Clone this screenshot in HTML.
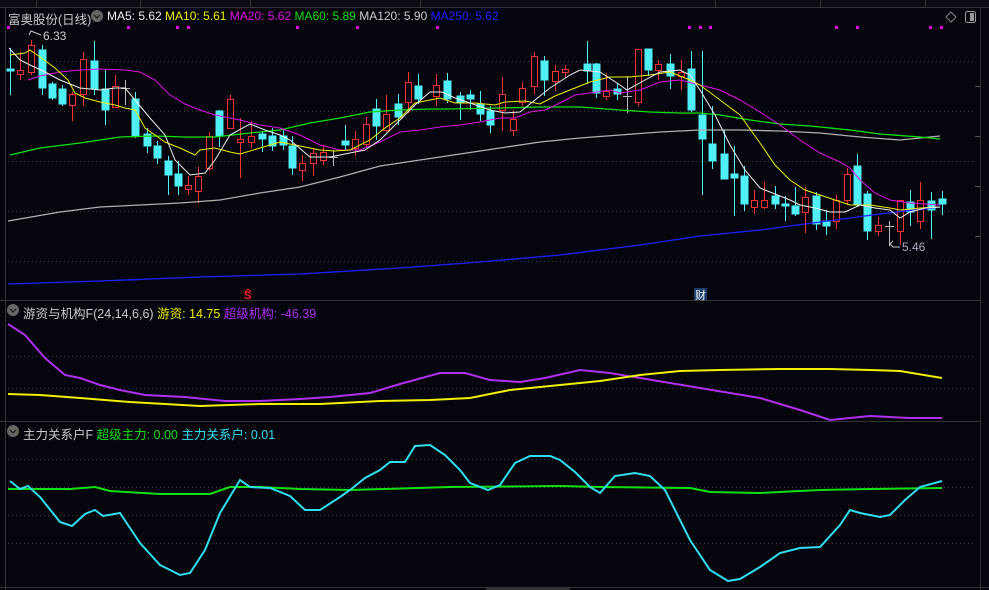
<!DOCTYPE html>
<html><head><meta charset="utf-8"><style>
body{margin:0;background:#05050d;width:989px;height:590px;overflow:hidden;font-family:"Liberation Sans","Noto Sans CJK SC",sans-serif}
svg{position:absolute;left:0;top:0}
.t{position:absolute;font-size:12.5px;white-space:nowrap}
.g{fill:#50f0f8;stroke:#50f0f8}
</style></head><body>
<svg width="989" height="590" xmlns="http://www.w3.org/2000/svg">
<rect width="989" height="590" fill="#05050d"/>
<rect x="0" y="0" width="989" height="7" fill="#0c0c14"/>
<g stroke="#333" stroke-width="1">
<line x1="0" y1="7.5" x2="989" y2="7.5"/>
<line x1="5.5" y1="7" x2="5.5" y2="590"/>
<line x1="980.5" y1="7" x2="980.5" y2="590"/>
<line x1="0" y1="300.5" x2="980" y2="300.5"/>
<line x1="0" y1="421.5" x2="980" y2="421.5"/>
<line x1="0" y1="587.5" x2="989" y2="587.5"/>
<line x1="36.5" y1="0" x2="36.5" y2="7"/><line x1="140.5" y1="0" x2="140.5" y2="7"/><line x1="250.5" y1="0" x2="250.5" y2="7"/><line x1="420.5" y1="0" x2="420.5" y2="7"/><line x1="715.5" y1="0" x2="715.5" y2="7"/><line x1="820.5" y1="0" x2="820.5" y2="7"/><line x1="925.5" y1="0" x2="925.5" y2="7"/>
</g>
<g stroke="#3a3a44" stroke-dasharray="1,3">
<line x1="8" y1="61.5" x2="975" y2="61.5"/><line x1="8" y1="111.5" x2="975" y2="111.5"/><line x1="8" y1="161.5" x2="975" y2="161.5"/><line x1="8" y1="211.5" x2="975" y2="211.5"/><line x1="8" y1="261.5" x2="975" y2="261.5"/>
<line x1="8" y1="356.5" x2="975" y2="356.5"/><line x1="8" y1="388.5" x2="975" y2="388.5"/>
<line x1="8" y1="459.5" x2="975" y2="459.5"/><line x1="8" y1="487.5" x2="975" y2="487.5"/><line x1="8" y1="515.5" x2="975" y2="515.5"/><line x1="8" y1="543.5" x2="975" y2="543.5"/>
</g>
<g stroke="#555"><line x1="975" y1="86.5" x2="980" y2="86.5"/><line x1="975" y1="136.5" x2="980" y2="136.5"/><line x1="975" y1="186.5" x2="980" y2="186.5"/><line x1="975" y1="236.5" x2="980" y2="236.5"/></g>
<g fill="#e000e0">
<rect x="7" y="26" width="3" height="3"/><rect x="127" y="26" width="3" height="3"/><rect x="176" y="26" width="3" height="3"/><rect x="187" y="26" width="3" height="3"/><rect x="296" y="26" width="3" height="3"/><rect x="356" y="26" width="3" height="3"/><rect x="436" y="26" width="3" height="3"/><rect x="688" y="26" width="3" height="3"/><rect x="699" y="26" width="3" height="3"/><rect x="709" y="26" width="3" height="3"/><rect x="835" y="26" width="3" height="3"/><rect x="856" y="26" width="3" height="3"/><rect x="929" y="26" width="3" height="3"/><rect x="940" y="26" width="3" height="3"/>
</g>
<g stroke-width="1">
<g stroke="#50f0f8"><line x1="10.5" y1="48" x2="10.5" y2="95"/><line x1="42.5" y1="45" x2="42.5" y2="95"/><line x1="52.5" y1="82" x2="52.5" y2="100"/><line x1="62.5" y1="85" x2="62.5" y2="106"/><line x1="94.5" y1="41" x2="94.5" y2="95"/><line x1="105.5" y1="70" x2="105.5" y2="125"/><line x1="135.5" y1="92" x2="135.5" y2="138"/><line x1="147.5" y1="128" x2="147.5" y2="153"/><line x1="157.5" y1="141" x2="157.5" y2="164"/><line x1="168.5" y1="156" x2="168.5" y2="195"/><line x1="178.5" y1="161" x2="178.5" y2="195"/><line x1="219.5" y1="110" x2="219.5" y2="147"/><line x1="262.5" y1="131" x2="262.5" y2="152"/><line x1="272.5" y1="128" x2="272.5" y2="151"/><line x1="283.5" y1="130" x2="283.5" y2="150"/><line x1="292.5" y1="136" x2="292.5" y2="175"/><line x1="345.5" y1="125" x2="345.5" y2="150"/><line x1="376.5" y1="99" x2="376.5" y2="140"/><line x1="398.5" y1="94" x2="398.5" y2="125"/><line x1="418.5" y1="74" x2="418.5" y2="104"/><line x1="447.5" y1="73" x2="447.5" y2="103"/><line x1="460.5" y1="92" x2="460.5" y2="120"/><line x1="470.5" y1="90" x2="470.5" y2="110"/><line x1="480.5" y1="91" x2="480.5" y2="121"/><line x1="490.5" y1="106" x2="490.5" y2="133"/><line x1="544.5" y1="56" x2="544.5" y2="96"/><line x1="587.5" y1="41" x2="587.5" y2="84"/><line x1="596.5" y1="63" x2="596.5" y2="98"/><line x1="617.5" y1="83" x2="617.5" y2="100"/><line x1="648.5" y1="49" x2="648.5" y2="76"/><line x1="670.5" y1="54" x2="670.5" y2="89"/><line x1="691.5" y1="51" x2="691.5" y2="112"/><line x1="702.5" y1="51" x2="702.5" y2="195"/><line x1="712.5" y1="106" x2="712.5" y2="169"/><line x1="724.5" y1="130" x2="724.5" y2="175"/><line x1="734.5" y1="146" x2="734.5" y2="216"/><line x1="744.5" y1="166" x2="744.5" y2="211"/><line x1="775.5" y1="186" x2="775.5" y2="209"/><line x1="785.5" y1="196" x2="785.5" y2="221"/><line x1="795.5" y1="187" x2="795.5" y2="216"/><line x1="816.5" y1="192" x2="816.5" y2="230"/><line x1="826.5" y1="210" x2="826.5" y2="235"/><line x1="857.5" y1="154" x2="857.5" y2="207"/><line x1="867.5" y1="191" x2="867.5" y2="240"/><line x1="910.5" y1="190" x2="910.5" y2="226"/><line x1="931.5" y1="192" x2="931.5" y2="239"/><line x1="942.5" y1="191" x2="942.5" y2="215"/></g>
<g stroke="#ff3030"><line x1="20.5" y1="52" x2="20.5" y2="80"/><line x1="31.5" y1="40" x2="31.5" y2="75"/><line x1="72.5" y1="92" x2="72.5" y2="121"/><line x1="83.5" y1="52" x2="83.5" y2="106"/><line x1="115.5" y1="75" x2="115.5" y2="108"/><line x1="188.5" y1="176" x2="188.5" y2="195"/><line x1="198.5" y1="167" x2="198.5" y2="203"/><line x1="209.5" y1="132" x2="209.5" y2="171"/><line x1="230.5" y1="95" x2="230.5" y2="129"/><line x1="240.5" y1="118" x2="240.5" y2="178"/><line x1="251.5" y1="121" x2="251.5" y2="148"/><line x1="302.5" y1="155" x2="302.5" y2="181"/><line x1="313.5" y1="149" x2="313.5" y2="176"/><line x1="323.5" y1="145" x2="323.5" y2="165"/><line x1="355.5" y1="131" x2="355.5" y2="156"/><line x1="366.5" y1="117" x2="366.5" y2="148"/><line x1="386.5" y1="95" x2="386.5" y2="132"/><line x1="408.5" y1="72" x2="408.5" y2="113"/><line x1="436.5" y1="74" x2="436.5" y2="106"/><line x1="502.5" y1="77" x2="502.5" y2="131"/><line x1="513.5" y1="110" x2="513.5" y2="136"/><line x1="522.5" y1="82" x2="522.5" y2="106"/><line x1="534.5" y1="52" x2="534.5" y2="94"/><line x1="555.5" y1="65" x2="555.5" y2="91"/><line x1="565.5" y1="65" x2="565.5" y2="78"/><line x1="606.5" y1="73" x2="606.5" y2="100"/><line x1="638.5" y1="49" x2="638.5" y2="106"/><line x1="658.5" y1="60" x2="658.5" y2="80"/><line x1="681.5" y1="60" x2="681.5" y2="90"/><line x1="754.5" y1="190" x2="754.5" y2="214"/><line x1="764.5" y1="182" x2="764.5" y2="209"/><line x1="805.5" y1="187" x2="805.5" y2="233"/><line x1="836.5" y1="195" x2="836.5" y2="229"/><line x1="847.5" y1="168" x2="847.5" y2="205"/><line x1="878.5" y1="217" x2="878.5" y2="236"/><line x1="900.5" y1="200" x2="900.5" y2="245"/><line x1="920.5" y1="182" x2="920.5" y2="229"/></g>
<g stroke="#bbb"><line x1="125.5" y1="80" x2="125.5" y2="105"/><line x1="121" y1="88.5" x2="130" y2="88.5"/><line x1="333.5" y1="150" x2="333.5" y2="166"/><line x1="329" y1="157.5" x2="338" y2="157.5"/><line x1="627.5" y1="76" x2="627.5" y2="113"/><line x1="623" y1="96.5" x2="632" y2="96.5"/><line x1="889.5" y1="221" x2="889.5" y2="246"/><line x1="885" y1="226.5" x2="894" y2="226.5"/></g>
</g>
<g class="g" stroke-width="1">
<rect x="7" y="69" width="7" height="2"/><rect x="39" y="50" width="7" height="38"/><rect x="49" y="84" width="7" height="14"/><rect x="59" y="89" width="7" height="15"/><rect x="91" y="61" width="7" height="28"/><rect x="102" y="89" width="7" height="21"/><rect x="132" y="99" width="7" height="37"/><rect x="144" y="134" width="7" height="12"/><rect x="154" y="146" width="7" height="12"/><rect x="165" y="161" width="7" height="14"/><rect x="175" y="174" width="7" height="12"/><rect x="216" y="111" width="7" height="25"/><rect x="259" y="134" width="7" height="5"/><rect x="269" y="136" width="7" height="10"/><rect x="280" y="136" width="7" height="9"/><rect x="289" y="146" width="7" height="22"/><rect x="342" y="141" width="7" height="4"/><rect x="373" y="109" width="7" height="17"/><rect x="395" y="104" width="7" height="13"/><rect x="415" y="86" width="7" height="13"/><rect x="444" y="81" width="7" height="18"/><rect x="457" y="96" width="7" height="6"/><rect x="467" y="95" width="7" height="4"/><rect x="477" y="104" width="7" height="10"/><rect x="487" y="111" width="7" height="14"/><rect x="541" y="61" width="7" height="19"/><rect x="584" y="64" width="7" height="7"/><rect x="593" y="64" width="7" height="29"/><rect x="614" y="89" width="7" height="5"/><rect x="645" y="49" width="7" height="21"/><rect x="667" y="64" width="7" height="12"/><rect x="688" y="69" width="7" height="41"/><rect x="699" y="115" width="7" height="24"/><rect x="709" y="144" width="7" height="17"/><rect x="721" y="154" width="7" height="25"/><rect x="731" y="174" width="7" height="4"/><rect x="741" y="176" width="7" height="28"/><rect x="772" y="196" width="7" height="8"/><rect x="782" y="204" width="7" height="2"/><rect x="792" y="206" width="7" height="8"/><rect x="813" y="196" width="7" height="28"/><rect x="823" y="221" width="7" height="5"/><rect x="854" y="166" width="7" height="38"/><rect x="864" y="194" width="7" height="37"/><rect x="907" y="202" width="7" height="10"/><rect x="928" y="201" width="7" height="9"/><rect x="939" y="199" width="7" height="5"/>
</g>
<g fill="#05050d" stroke="#ff3030" stroke-width="1">
<rect x="17.5" y="70.5" width="6" height="4"/><rect x="28.5" y="45.5" width="6" height="27"/><rect x="69.5" y="94.5" width="6" height="11"/><rect x="80.5" y="59.5" width="6" height="35"/><rect x="112.5" y="86.5" width="6" height="21"/><rect x="185.5" y="185.5" width="6" height="4"/><rect x="195.5" y="176.5" width="6" height="15"/><rect x="206.5" y="136.5" width="6" height="32"/><rect x="227.5" y="99.5" width="6" height="29"/><rect x="237.5" y="139.5" width="6" height="3"/><rect x="248.5" y="136.5" width="6" height="6"/><rect x="299.5" y="163.5" width="6" height="7"/><rect x="310.5" y="153.5" width="6" height="10"/><rect x="320.5" y="152.5" width="6" height="8"/><rect x="352.5" y="139.5" width="6" height="9"/><rect x="363.5" y="124.5" width="6" height="20"/><rect x="383.5" y="114.5" width="6" height="16"/><rect x="405.5" y="82.5" width="6" height="20"/><rect x="433.5" y="85.5" width="6" height="11"/><rect x="499.5" y="94.5" width="6" height="16"/><rect x="510.5" y="119.5" width="6" height="11"/><rect x="519.5" y="88.5" width="6" height="14"/><rect x="531.5" y="56.5" width="6" height="30"/><rect x="552.5" y="71.5" width="6" height="10"/><rect x="562.5" y="69.5" width="6" height="3"/><rect x="603.5" y="91.5" width="6" height="5"/><rect x="635.5" y="49.5" width="6" height="53"/><rect x="655.5" y="64.5" width="6" height="6"/><rect x="678.5" y="72.5" width="6" height="4"/><rect x="751.5" y="200.5" width="6" height="7"/><rect x="761.5" y="200.5" width="6" height="7"/><rect x="802.5" y="197.5" width="6" height="15"/><rect x="833.5" y="200.5" width="6" height="21"/><rect x="844.5" y="174.5" width="6" height="26"/><rect x="875.5" y="225.5" width="6" height="6"/><rect x="897.5" y="200.5" width="6" height="31"/><rect x="917.5" y="200.5" width="6" height="21"/>
</g>
<g fill="none" stroke-width="1">
<polyline stroke="#b0b0b0" stroke-width="1.3" points="8,221 60,212 100,207 140,205 180,203 220,200 260,193 300,187 340,177 380,166 420,160 460,154 500,148 540,142 580,138 620,135 660,132 700,130 740,130 780,131 820,133 860,137 900,140 940,136"/>
<polyline stroke="#2020ff" stroke-width="1.3" points="8,284 100,281 200,277 300,274 400,268 480,262 560,255 640,245 700,236 760,230 820,222 880,214 940,207"/>
<polyline stroke="#10e010" stroke-width="1.3" points="10,155 40,148 80,143 120,137 155,136 185,137 215,137 250,133 280,130 310,123 340,118 370,112 400,110 430,109 450,109 500,108 540,107 580,107 620,110 650,112 680,113 700,113 720,115 750,120 780,124 810,126 850,130 880,134 920,137 940,139"/>
<polyline stroke="#e010e0" points="28,80 40,76 60,72 80,70 100,69 125,70 140,72 155,80 170,95 185,104 200,110 215,115 240,120 260,125 280,128 300,135 320,145 340,150 360,150 380,142 400,132 420,130 440,127 460,125 480,122 500,118 515,118 530,112 545,110 560,103 575,95 590,93 610,90 620,93 640,90 660,82 680,80 700,85 720,90 740,100 760,112 780,125 800,140 820,153 840,162 850,168 860,180 875,193 890,200 910,203 940,205"/>
<polyline stroke="#f0f000" points="10,55 25,53 30,50 40,57 55,68 68,80 75,93 85,98 100,102 115,105 125,108 135,110 145,128 165,142 180,148 195,155 200,150 215,148 230,152 240,154 260,148 280,142 300,146 320,150 335,151 350,150 370,140 385,128 400,118 415,103 440,98 455,103 475,103 495,105 505,102 525,101 540,104 555,96 570,90 590,82 610,77 630,77 650,75 670,72 690,80 700,85 720,100 740,115 760,143 775,165 790,180 805,190 820,195 835,200 850,205 870,205 890,208 900,210 920,208 940,207"/>
<polyline stroke="#f0f0f0" points="9,48 20,60 30,65 45,72 60,80 80,88 100,90 115,88 125,88 135,100 150,118 165,135 175,160 190,175 205,173 215,160 230,135 250,124 265,130 280,135 290,140 310,157 330,157 345,154 365,150 380,140 395,125 415,105 430,92 442,92 455,98 470,103 490,110 505,113 520,112 535,100 550,88 570,75 580,70 600,72 620,85 627,90 645,80 660,72 680,70 690,75 700,90 715,115 730,145 745,170 760,188 775,194 790,200 800,205 815,208 830,212 845,212 860,205 875,208 890,210 900,218 910,212 925,208 940,207"/>
</g>
<polyline points="41,35 31,31 29,35" fill="none" stroke="#ccc"/>
<text x="43" y="40" fill="#ccc" font-size="12" font-family="Liberation Sans">6.33</text>
<polyline points="893,241 890,244 893,247 900,247" fill="none" stroke="#ccc"/>
<text x="902" y="251" fill="#aab" font-size="12" font-family="Liberation Sans">5.46</text>
<text x="244" y="299" fill="#ff2020" font-size="11" font-weight="bold" font-family="Liberation Sans">S</text>
<polyline points="245,292 248,289 251,292" fill="none" stroke="#ff2020"/>
<rect x="694" y="288" width="13" height="12" fill="#1b3a6a"/>
<text x="695" y="299" fill="#fff" font-size="11" font-family="Noto Sans CJK SC,sans-serif">财</text>
<polyline fill="none" stroke="#b030f0" stroke-width="2" points="8,324 25,335 45,358 65,375 80,378 100,385 120,390 145,395 185,397 225,401 260,401 300,399 330,397 370,393 400,384 440,373 465,373 490,380 520,382 545,378 580,370 610,373 640,378 670,383 700,388 730,393 760,398 800,410 830,420 870,416 910,418 942,418"/>
<polyline fill="none" stroke="#f0f000" stroke-width="2" points="8,394 40,395 80,398 130,402 200,406 260,404 320,404 380,401 430,400 470,398 510,390 560,385 600,381 640,375 680,371 720,370 780,369 830,369 870,370 900,371 942,378"/>
<polyline fill="none" stroke="#10e010" stroke-width="2" points="8,489 70,489 95,487 110,491 160,494 210,494 230,487 260,487 300,489 350,490 450,487 560,486 600,487 690,488 710,492 760,493 820,490 870,489 942,488"/>
<polyline fill="none" stroke="#30e0f0" stroke-width="2" points="10,481 20,489 28,486 40,497 60,522 72,526 85,514 95,510 103,516 120,513 140,543 160,565 180,575 190,573 205,550 220,513 240,480 250,487 270,488 290,496 305,510 320,510 340,497 350,490 365,478 380,470 390,462 405,462 415,446 430,445 445,455 460,470 470,483 488,490 500,485 515,463 530,456 550,456 560,460 575,472 590,487 600,493 615,476 635,473 650,476 665,490 690,540 710,570 728,581 740,579 760,567 780,553 800,548 820,547 840,525 850,510 860,513 880,517 890,515 905,500 920,487 942,481"/>
<circle cx="97" cy="16" r="6" fill="#666"/><polyline points="94,15 97,18 100,15" fill="none" stroke="#222" stroke-width="1.3"/>
<circle cx="13" cy="310" r="6" fill="#666"/><polyline points="10,309 13,312 16,309" fill="none" stroke="#222" stroke-width="1.3"/>
<circle cx="13" cy="431" r="6" fill="#666"/><polyline points="10,430 13,433 16,430" fill="none" stroke="#222" stroke-width="1.3"/>
<polygon points="951,12 956,17 951,22 946,17" fill="none" stroke="#888"/>
<rect x="965.5" y="11.5" width="10" height="11" rx="2" fill="none" stroke="#999"/><rect x="970" y="13" width="4" height="8" fill="#999"/>
<rect x="486" y="587" width="84" height="3" fill="#333"/>
</svg>
<div class="t" style="left:8px;top:9px;color:#ccc">富奥股份(日线)</div>
<div class="t" style="left:107px;top:9px;font-size:12px"><span style="color:#eee">MA5: 5.62</span> <span style="color:#f0f000">MA10: 5.61</span> <span style="color:#e010e0">MA20: 5.62</span> <span style="color:#10e010">MA60: 5.89</span> <span style="color:#ccc">MA120: 5.90</span> <span style="color:#2020ff">MA250: 5.62</span></div>
<div class="t" style="left:23px;top:303px;color:#ccc">游资与机构F(24,14,6,6) <span style="color:#f0f000">游资: 14.75</span> <span style="color:#b030f0">超级机构: -46.39</span></div>
<div class="t" style="left:23px;top:424px;color:#ccc">主力关系户F <span style="color:#10e010">超级主力: 0.00</span> <span style="color:#30e0f0">主力关系户: 0.01</span></div>
</body></html>
